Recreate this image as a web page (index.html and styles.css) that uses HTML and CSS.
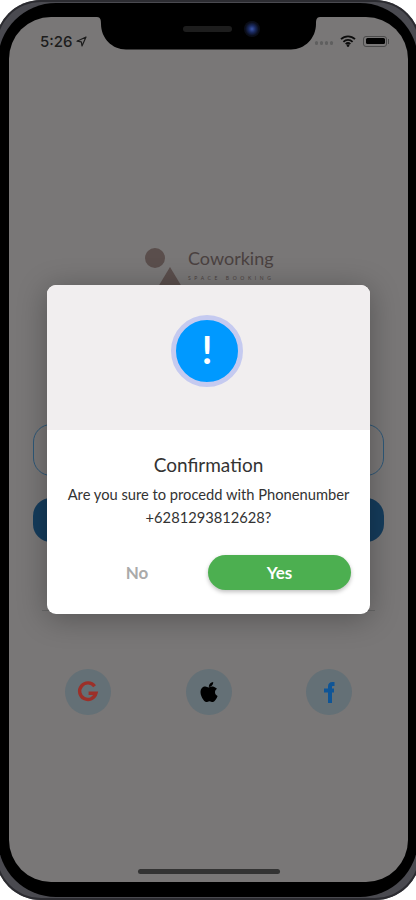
FILE: index.html
```html
<!DOCTYPE html>
<html lang="en">
<head>
  <meta charset="UTF-8">
  <title>Coworking Space Booking</title>
  <meta name="viewport" content="width=device-width, initial-scale=1.0"/>
  <link rel="stylesheet" href="styles.css">
</head>
<body>
  <div class="phone">
    <div class="bezel">
      <div class="screen">
        <div class="status-bar">
          <div class="status-left">
            <span class="time">5:26</span>
            <svg class="arrow-icon" width="11" height="11" viewBox="0 0 11 11"><path d="M10 1 1 5.2l4.3.6.7 4.2z" fill="none" stroke="#1c1c1c" stroke-width="1.2" stroke-linejoin="round"/></svg>
          </div>
          <div class="status-right">
            <div class="signal-dots"><i></i><i></i><i></i><i></i></div>
            <svg width="16" height="12" viewBox="0 0 16 12"><path d="M1 4.2a10 10 0 0 1 14 0M3.4 6.8a6.6 6.6 0 0 1 9.2 0M5.7 9.1a3.3 3.3 0 0 1 4.6 0" fill="none" stroke="#0c0c0c" stroke-width="1.8"/><circle cx="8" cy="10.6" r="1.3" fill="#0c0c0c"/></svg>
            <div class="battery"><span></span></div>
          </div>
        </div>

        <div class="logo">
          <div class="logo-shapes">
            <span class="logo-circle"></span>
            <span class="logo-triangle"></span>
          </div>
          <div>
            <div class="logo-name">Coworking</div>
            <div class="logo-sub">SPACE BOOKING</div>
          </div>
        </div>

        <div class="phone-input"></div>
        <div class="submit-btn"></div>

        <div class="divider"><span>Login</span></div>

        <div class="social">
          <div class="social-btn">
            <svg width="22" height="22" viewBox="0 0 22 22"><path d="M17.6 5.2A8.3 8.3 0 1 0 19 12.2H11.6" fill="none" stroke="#9c3029" stroke-width="3.4"/></svg>
          </div>
          <div class="social-btn">
            <svg width="20" height="22" viewBox="0 0 20 22"><path d="M14.2 1c.1 1.500-.4 2.700-1.200 3.600-.8.900-2 1.500-3.100 1.400-.2-1.300.5-2.700 1.200-3.500C11.900 1.600 13.200 1.100 14.200 1zM18 7.800c-1.300.9-2 2-2 3.500 0 1.700 1 3 2.600 3.700-.5 1.400-1.100 2.600-2 3.800-.8 1.100-1.600 2.200-2.900 2.200s-1.700-.8-3.200-.8-2 .8-3.200.8c-1.300 0-2.200-1.200-3.100-2.400C2.800 16.500 1.500 13.800 1.500 11.300c0-3.700 2.400-5.700 4.800-5.700 1.300 0 2.300.8 3.200.8.800 0 2-.9 3.500-.9 1.200 0 3.300.4 5 2.300z" fill="#000"/></svg>
          </div>
          <div class="social-btn">
            <svg width="14" height="24" viewBox="0 0 14 24"><path d="M12.500 4H10.500C8.800 4 8 4.900 8 6.500V23M2 10.500H12" fill="none" stroke="#0f5596" stroke-width="4"/></svg>
          </div>
        </div>

        <div class="dialog">
          <div class="dialog-top">
            <div class="alert-icon">!</div>
          </div>
          <div class="dialog-body">
            <h2>Confirmation</h2>
            <p>Are you sure to procedd with Phonenumber<br>+6281293812628?</p>
            <div class="dialog-actions">
              <button class="btn-no">No</button>
              <button class="btn-yes">Yes</button>
            </div>
          </div>
        </div>

        <div class="home-bar"></div>
      </div>

      <svg class="notch" width="223" height="33" viewBox="0 0 223 33"><path d="M0 0H223C219.500 0 219 3 219 7 219 21 208 32.500 194 32.500H29C15 32.500 4 21 4 7 4 3 3.500 0 0 0Z" fill="#000"/></svg>
      <div class="speaker"></div>
      <div class="camera"></div>
    </div>
  </div>
</body>
</html>
```

FILE: styles.css
```css
* {
  box-sizing: border-box;
}
html, body {
  margin: 0;
  background: #fff;
}
body {
  font-family: Lato, sans-serif;
  overflow: hidden;
}
.phone {
  width: 426px;
  height: 900px;
  margin-left: -5px;
  padding: 3px;
  background: #4a4a50;
  border-radius: 46px;
  box-shadow: inset 0 0 0 2px #2c2c31;
}
.bezel {
  position: relative;
  height: 894px;
  padding: 14px 10px 15px 11px;
  background: #000;
  border-radius: 58px;
}
.screen {
  position: relative;
  height: 865px;
  background: #797777;
  border-radius: 42px;
  overflow: hidden;
}

/* status bar */
.status-bar {
  display: flex;
  justify-content: space-between;
  align-items: center;
  height: 16px;
  margin-top: 16px;
  padding: 0 21px 0 31px;
}
.status-left {
  display: flex;
  align-items: center;
  gap: 3px;
}
.time {
  font-family: Inter, sans-serif;
  font-size: 15px;
  font-weight: 500;
  color: #1c1c1c;
}
.status-right {
  display: flex;
  align-items: center;
  gap: 7px;
}
.signal-dots {
  display: flex;
  gap: 1.5px;
  margin-top: 4px;
}
.signal-dots i {
  width: 3.5px;
  height: 3.5px;
  border-radius: 50%;
  background: #5f5f5f;
}
.battery {
  position: relative;
  width: 24px;
  height: 11px;
  padding: 1.5px;
  border: 1px solid #4a4a4a;
  border-radius: 3px;
}
.battery span {
  display: block;
  height: 100%;
  background: #000;
  border-radius: 1.5px;
}
.battery::after {
  content: "";
  position: absolute;
  top: 2px;
  right: -3px;
  width: 1px;
  height: 5px;
  background: #4a4a4a;
}

/* logo */
.logo {
  display: flex;
  gap: 7px;
  height: 40px;
  margin: 196px 0 0 135px;
}
.logo-shapes {
  position: relative;
  width: 37px;
  height: 40px;
}
.logo-circle {
  display: block;
  width: 20px;
  height: 20px;
  margin: 3px 0 0 1px;
  border-radius: 50%;
  background: #5a4e4c;
}
.logo-triangle {
  display: block;
  width: 0;
  height: 0;
  margin: -1px 0 0 14px;
  border-left: 12px solid transparent;
  border-right: 12px solid transparent;
  border-bottom: 20px solid #5a4e4c;
}
.logo-name {
  font-size: 18px;
  font-weight: 400;
  line-height: 24px;
  margin-top: 1px;
  color: #4a4140;
}
.logo-sub {
  font-size: 5px;
  letter-spacing: 3.6px;
  line-height: 8px;
  margin-top: 4px;
  color: #4a4140;
  white-space: nowrap;
}

/* form behind the dialog */
.phone-input {
  height: 52px;
  margin: 139px 24px 0;
  border: 1px solid #2e5878;
  border-radius: 18px;
}
.submit-btn {
  height: 44px;
  margin: 22px 24px 0;
  background: #153c5c;
  border-radius: 18px;
}
.divider {
  margin: 68px 33px 0;
  height: 17px;
  border-top: 1px solid #666;
  text-align: center;
  font-size: 14px;
  color: #222;
}
.divider span {
  display: block;
  margin-top: -13px;
}
.social {
  display: grid;
  grid-template-columns: repeat(3, 46px);
  justify-content: space-between;
  margin: 42px 56px 0;
}
.social-btn {
  display: flex;
  align-items: center;
  justify-content: center;
  width: 46px;
  height: 46px;
  border-radius: 50%;
  background: #647076;
}

/* dialog */
.dialog {
  position: absolute;
  top: 268px;
  left: 38px;
  width: 323px;
  height: 329px;
  background: #fff;
  border-radius: 9px;
  overflow: hidden;
  box-shadow: 0 4px 30px rgba(0, 0, 0, 0.3);
}
.dialog-top {
  display: flex;
  justify-content: center;
  height: 145px;
  padding-top: 30px;
  background: #f1eeef;
}
.alert-icon {
  width: 72px;
  height: 72px;
  margin-left: -3px;
  border: 5px solid #c5caf0;
  border-radius: 50%;
  background: #0099ff;
  color: #fff;
  font-size: 38px;
  font-weight: 700;
  line-height: 58px;
  text-align: center;
}
.dialog-body {
  padding: 22px 19px 0;
  text-align: center;
}
.dialog-body h2 {
  margin: 0;
  font-size: 19px;
  font-weight: 400;
  line-height: 26px;
  color: #333;
}
.dialog-body p {
  margin: 5px 0 0;
  font-size: 14.7px;
  line-height: 23px;
  color: #333;
  white-space: nowrap;
}
.dialog-actions {
  display: grid;
  grid-template-columns: 1fr 143px;
  align-items: center;
  margin-top: 26px;
}
.dialog-actions button {
  height: 35px;
  padding: 0;
  border: none;
  border-radius: 18px;
  font-family: inherit;
  font-size: 17px;
  font-weight: 700;
}
.btn-no {
  background: none;
  color: #aaa;
}
.btn-yes {
  background: #4caf50;
  color: #fff;
  box-shadow: 0 2px 4px rgba(0, 0, 0, 0.25);
}

.home-bar {
  position: absolute;
  left: 129px;
  bottom: 8px;
  width: 142px;
  height: 5px;
  border-radius: 3px;
  background: #333;
}

/* hardware over the screen */
.notch {
  position: absolute;
  left: 99px;
  top: 14px;
}
.speaker {
  position: absolute;
  left: 185px;
  top: 23px;
  width: 49px;
  height: 6px;
  border-radius: 3px;
  background: #1d1d1d;
}
.camera {
  position: absolute;
  left: 246px;
  top: 18px;
  width: 16px;
  height: 16px;
  border-radius: 50%;
  background: radial-gradient(circle, #3b55a8 0, #1a2a60 30%, #0a0d18 60%);
}
```
